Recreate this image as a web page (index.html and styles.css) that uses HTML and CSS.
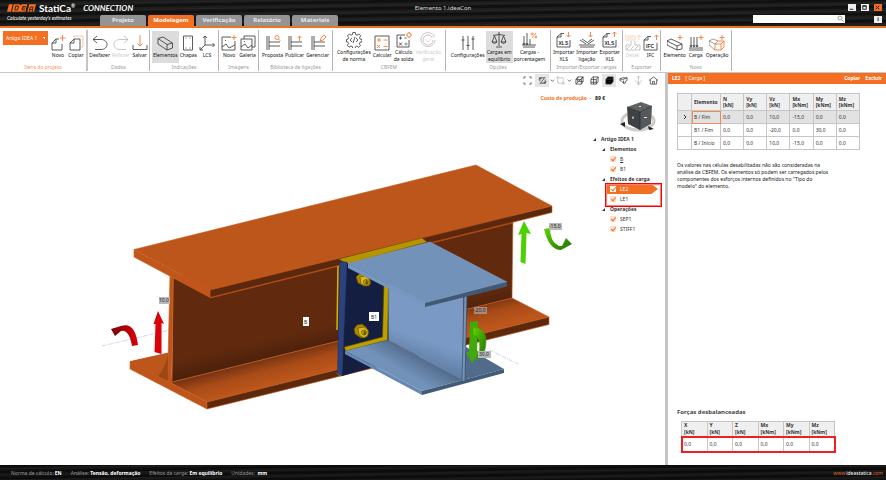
FILE: index.html
```html
<!DOCTYPE html>
<html lang="pt">
<head>
<meta charset="utf-8">
<title>Elemento 1.ideaCon</title>
<link rel="stylesheet" href="styles.css">
</head>
<body>
<svg class="sprite" aria-hidden="true">
  <symbol id="new" viewBox="0 0 16 16"><path d="M9 4H6L2 8v7h10V9M6 4v4H2"/><path class="o" d="M12.500 0v6M9.500 3h6"/></symbol>
  <symbol id="copy" viewBox="0 0 16 16"><path class="p" d="M6 3V1h9v11h-2"/><path d="M6 4h6v11H2V8zM6 4v4H2"/></symbol>
  <symbol id="undo" viewBox="0 0 16 16"><path d="M5 1L1 4.500 5 8M1 4.500h8c8 0 8 10 0 10H3"/></symbol>
  <symbol id="redo" viewBox="0 0 16 16"><path d="M11 1l4 3.500L11 8M15 4.500H7c-8 0-8 10 0 10h6"/></symbol>
  <symbol id="save" viewBox="0 0 16 16"><path class="o" d="M8 0v11M5.500 8.500L8 11l2.500-2.500"/><path d="M1 10v4.500h14V10"/></symbol>
  <symbol id="beam" viewBox="0 0 16 16"><path d="M1 3.500L6 2l9.500 6v5L10 15 1 9zM1 3.500L10 9.500 15.500 8M10 9.500V15"/></symbol>
  <symbol id="plate" viewBox="0 0 16 16"><path d="M3.500 1h9v14h-9z"/><path d="M5.500 3h1M9.500 3h1M5.500 13h1M9.500 13h1"/></symbol>
  <symbol id="axes" viewBox="0 0 16 16"><path d="M6 1v9h9.500M6 10l-5 5M4 3l2-2 2 2M13.500 8l2 2-2 2M1 12v3h3"/></symbol>
  <symbol id="image" viewBox="0 0 16 16"><path d="M10 2H1v13h13V6M1 12l4-3 3 4 6-3M4 5.500h1"/><path class="o" d="M13 0v5M10.500 2.500h5"/></symbol>
  <symbol id="gallery" viewBox="0 0 16 16"><path d="M1 4h11v11H1zM4 4V1h11v11h-3M1 12l4-3 3 4 4-3M4 6.500h1"/></symbol>
  <symbol id="propose" viewBox="0 0 16 16"><path d="M2 1v14M4 1v14M4 7h11M4 11h11"/><circle class="o" cx="12" cy="2.500" r="2"/><path class="o" d="M13.500 4l2 2"/></symbol>
  <symbol id="publish" viewBox="0 0 16 16"><path d="M2 1v14M4 1v14M4 7h11M4 11h11"/><path class="o" d="M12.500 6V1M10.500 3l2-2 2 2"/></symbol>
  <symbol id="manage" viewBox="0 0 16 16"><path d="M2 1v14M4 1v14M4 7h11M4 11h11"/><path class="o" d="M10 6l1-3 3-3 2 2-3 3z"/></symbol>
  <symbol id="gear" viewBox="0 0 16 16"><path d="M6.800.500h2.400l.4 2 1.500.700 1.800-1.200 1.800 1.800-1.200 1.800.700 1.500 1.800.4v2.400l-2 .4-.700 1.500 1.200 1.800-1.800 1.800-1.800-1.200-1.500.700-.4 1.800H6.800l-.4-2-1.500-.700-1.800 1.200-1.800-1.800 1.200-1.800-.700-1.500-1.300-.2V7.500l1.500-.400.700-1.500L1.500 3.800l1.800-1.800 1.800 1.200 1.400-.7z"/><path d="M6 6L4 8l2 2M10 6l2 2-2 2M9 5l-2 6"/></symbol>
  <symbol id="calc" viewBox="0 0 16 16"><path d="M1 1h14v14H1z"/><path class="o" d="M3 5h4M5 3v4M9.500 5h4M3 10l3 3M6 10l-3 3M9.500 11.500h4M11.500 9.500v.500M11.500 13v.500"/></symbol>
  <symbol id="weld" viewBox="0 0 16 16"><path d="M9 3H1v12h12V8M3 6h3M4.500 4.500v3M8.500 6h2M3 10.500l3 3M6 10.500l-3 3M8.500 12h3M10 10v.500M10 13.500v.500"/><circle class="o" cx="13" cy="3" r="2"/><path class="o" d="M13 0v1M16 3h-1M13 6V5M10 3h1"/></symbol>
  <symbol id="check" viewBox="0 0 16 16"><path d="M14.500 5A7 7 0 1 0 15 8M12 5a5 5 0 1 0 1 3"/><path class="o" d="M5 7l3 3 7-8"/></symbol>
  <symbol id="sliders" viewBox="0 0 16 16"><path d="M3 1v14M8 1v14M13 1v14M1.500 5h3M6.500 10.500h3M11.500 4h3"/></symbol>
  <symbol id="scale" viewBox="0 0 16 16"><path d="M8 0v14M5 15h6M2 3.500l6-1 6 1M3.500 4L1 10h5zM12.500 4L10 10h5zM1 10q2.500 3 5 0M10 10q2.500 3 5 0"/></symbol>
  <symbol id="percent" viewBox="0 0 16 16"><path d="M3 4v9M6 1v12M9 7v6M1 13h14M2 15h12M2 11l1 2 1-2M5 11l1 2 1-2"/><circle class="o" cx="11" cy="2" r="1"/><circle class="o" cx="15" cy="5" r="1"/><path class="o" d="M15 1l-4 5"/></symbol>
  <symbol id="xlsin" viewBox="0 0 16 16"><path d="M8 1.500H5L1 5v10h13V8M5 1.500V5H1"/><path class="o" d="M12.500 0v5M10.500 3l2 2 2-2"/><text x="2.500" y="12.500">XLS</text></symbol>
  <symbol id="xlsout" viewBox="0 0 16 16"><path d="M8 1.500H5L1 5v10h13V8M5 1.500V5H1"/><path class="o" d="M12.500 5V0M10.500 2l2-2 2 2"/><text x="2.500" y="12.500">XLS</text></symbol>
  <symbol id="ifc" viewBox="0 0 16 16"><path d="M8 1.500H5L1 5v10h13V8M5 1.500V5H1"/><path class="o" d="M13.500 5V0M11.500 2l2-2 2 2"/><text x="3" y="12.500">IFC</text></symbol>
  <symbol id="joint" viewBox="0 0 16 16"><path d="M0 13h16M1 8l6 4M3 7l6 4M15 8l-6 4M13 7l-4 3M1 15h14"/><path class="o" d="M11.500 0v5M9.500 3l2 2 2-2"/></symbol>
  <symbol id="detail" viewBox="0 0 16 16"><path d="M6 6v4H1v5h14v-5h-5V6M2 14l3-3M6 14l3-3M10 14l3-3"/><path class="o" d="M0 1h10v4H0zM2 3h6M14 5V0M12 2l2-2 2 2"/></symbol>
  <symbol id="addbeam" viewBox="0 0 16 16"><path d="M0 6l4-2 11 5v5l-5 1L0 10zM0 6l10 5 5-2M10 11v4"/><path class="o" d="M13 0v5M10.500 2.500h5"/></symbol>
  <symbol id="addload" viewBox="0 0 16 16"><path d="M3 2v10M6 2v10M9 2v10M1 13h14M1 15h14M2 10l1 2 1-2M5 10l1 2 1-2M8 10l1 2 1-2"/><path class="o" d="M13 0v5M10.500 2.500h5"/></symbol>
  <symbol id="addop" viewBox="0 0 16 16"><path d="M6 15L0 10V6l4-2 5 2M0 6l6 3" opacity=".6"/><path class="o" d="M6 9h6v6H6zM6 9l3-3h6l-3 3M15 6v6l-3 3M13 0v5M10.500 2.500h5"/></symbol>
</svg>

<header class="top">
  <div class="brand">
    <div class="logo">
      <svg viewBox="0 0 30 8" aria-hidden="true"><path d="M2 0h4L4 8H0zM7 0h6l2 2-1.500 6H5zM15 0h6l-2 8h-6zM23 0h7l-2 8h-7z" fill="#f36f21"/><path d="M9 2h3l-1 4H8zM19.500 2.500h-3l-1 3.500h3M16 4h3M23 8l1-5h3l-1 5M23.500 5.500h3" fill="none" stroke="#111"/></svg>
      <b>StatiCa<sup>®</sup></b><strong>CONNECTION</strong>
    </div>
    <em>Calculate yesterday's estimates</em>
  </div>
  <nav class="tabs">
    <a href="#">Projeto</a><a href="#" class="on">Modelagem</a><a href="#">Verificação</a><a href="#">Relatório</a><a href="#">Materiais</a>
  </nav>
  <h1>Elemento 1.ideaCon</h1>
  <div class="win">
    <div class="ctl">
      <button aria-label="Minimizar"><svg viewBox="0 0 8 8"><path d="M2 6h4"/></svg></button>
      <button aria-label="Maximizar"><svg viewBox="0 0 8 8"><path d="M2 2h4v4H2zM2 2.500h4"/></svg></button>
      <button aria-label="Fechar" class="close"><svg viewBox="0 0 8 8"><path d="M2 2l4 4M6 2L2 6"/></svg></button>
    </div>
    <div class="find">
      <label><input type="search" aria-label="Pesquisar"><svg viewBox="0 0 8 8"><circle cx="3" cy="3" r="2"/><path d="M4.500 4.500L7 7"/></svg></label>
      <button aria-label="Informação">i</button>
    </div>
  </div>
</header>

<section class="ribbon">
  <div class="group first"><div class="tools"><select aria-label="Item do projeto"><option>Artigo IDEA 1</option></select>
    <button><svg><use href="#new"/></svg>Novo</button><button><svg><use href="#copy"/></svg>Copiar</button></div><h2>Itens do projeto</h2></div>
  <div class="group"><div class="tools"><button><svg><use href="#undo"/></svg>Desfazer</button><button disabled><svg><use href="#redo"/></svg>Refazer</button><button><svg><use href="#save"/></svg>Salvar</button></div><h2>Dados</h2></div>
  <div class="group"><div class="tools"><button class="sel"><svg><use href="#beam"/></svg>Elementos</button><button><svg><use href="#plate"/></svg>Chapas</button><button><svg><use href="#axes"/></svg>LCS</button></div><h2>Indicações</h2></div>
  <div class="group"><div class="tools"><button><svg><use href="#image"/></svg>Novo</button><button><svg><use href="#gallery"/></svg>Galeria</button></div><h2>Imagens</h2></div>
  <div class="group"><div class="tools"><button><svg><use href="#propose"/></svg>Proposta</button><button><svg><use href="#publish"/></svg>Publicar</button><button><svg><use href="#manage"/></svg>Gerenciar</button></div><h2>Biblioteca de ligações</h2></div>
  <div class="group"><div class="tools"><button><svg><use href="#gear"/></svg>Configurações<br>de norma</button><button><svg><use href="#calc"/></svg>Calcular</button><button><svg><use href="#weld"/></svg>Cálculo<br>da solda</button><button disabled><svg><use href="#check"/></svg>Verificação<br>geral</button></div><h2>CBFEM</h2></div>
  <div class="group"><div class="tools"><button><svg><use href="#sliders"/></svg>Configurações</button><button class="sel"><svg><use href="#scale"/></svg>Cargas em<br>equilíbrio</button><button><svg><use href="#percent"/></svg>Cargas -<br>porcentagem</button></div><h2>Opções</h2></div>
  <div class="group"><div class="tools"><button><svg><use href="#xlsin"/></svg>Importar<br>XLS</button><button><svg><use href="#joint"/></svg>Importar<br>ligação</button><button><svg><use href="#xlsout"/></svg>Exportar<br>XLS</button></div><h2>Importar/Exportar cargas</h2></div>
  <div class="group"><div class="tools"><button disabled><svg><use href="#detail"/></svg>Detail</button><button><svg><use href="#ifc"/></svg>IFC</button></div><h2>Exportar</h2></div>
  <div class="group"><div class="tools"><button><svg><use href="#addbeam"/></svg>Elemento</button><button><svg><use href="#addload"/></svg>Carga</button><button><svg><use href="#addop"/></svg>Operação</button></div><h2>Novo</h2></div>
</section>

<main>
  <section class="stage">
    <svg class="scene" viewBox="0 73 665 392" role="img" aria-label="Modelo 3D">
      <defs>
        <linearGradient id="shade" gradientUnits="userSpaceOnUse" x1="330" y1="340" x2="337" y2="367"><stop offset="0" stop-color="#6d3012"/><stop offset=".5" stop-color="#a94b18"/><stop offset="1" stop-color="#bc561b"/></linearGradient>
        <linearGradient id="webg" gradientUnits="userSpaceOnUse" x1="330" y1="325" x2="334" y2="343"><stop offset="0" stop-color="#612a0e"/><stop offset="1" stop-color="#4d210b"/></linearGradient>
        <linearGradient id="bshade" gradientUnits="userSpaceOnUse" x1="424" y1="358" x2="413" y2="377"><stop offset="0" stop-color="#526b8c"/><stop offset="1" stop-color="#7292b9"/></linearGradient>
        <linearGradient id="bweb" gradientUnits="userSpaceOnUse" x1="426" y1="340" x2="419" y2="360"><stop offset="0" stop-color="#7a9ac5"/><stop offset="1" stop-color="#6381a8"/></linearGradient>
        <linearGradient id="green" x2="1" y2="1"><stop offset="0" stop-color="#5ed500"/><stop offset="1" stop-color="#236c08"/></linearGradient>
        <linearGradient id="red" x2="1"><stop offset="0" stop-color="#780006"/><stop offset="1" stop-color="#dc0009"/></linearGradient>
      </defs>
      <path d="M102 346l68-16M490 350l28 14" fill="none" stroke="#b8cce8" stroke-dasharray="4 1 1 1"/>
      <g stroke="#cd5e1d" stroke-width=".6">
        <path d="M130 361.500L168 353l4 29 340-84 37 19-342 85z" fill="url(#shade)"/>
        <path d="M130 361.500L207 402v7l-77-40z" fill="#bd541a"/>
        <path d="M207 402l342-85v7.500L207 409z" fill="#5d290e"/>
        <path d="M130 361.500L168 353l2 29 2 1.500z" fill="#bc561b" stroke="none"/>
        <path d="M173 277l340-62-1 83-340 84z" fill="url(#webg)"/>
        <path d="M170 274l3.500 3-2 105-4 1z" fill="#be561c"/>
        <path d="M134 249.500L476 165l76 41-342 84z" fill="#bc561b"/>
        <path d="M134 249.500L210 290v7.500L134 257z" fill="#c0561b"/>
        <path d="M210 290l342-84v6.500L210 297.500z" fill="#5b280e"/>
        <path d="M210 298l303-75" fill="none"/>
      </g>
      <path d="M168 354v27l-10-5q7-7 10-22z" fill="#652b0f" opacity=".35"/>
      <path d="M339 259l83-21 5 4-80 22z" fill="#b49400" stroke="#6f5900" stroke-width=".5"/>
      <path d="M338 266l-1 64M337 373l4 3" stroke="#d3b400" stroke-width="1.500"/>
      <path d="M347 263l42 20v62l-19 23-28 8z" fill="#131e40"/>
      <path d="M340 262h7l-5 114-4.500-2z" fill="#2a437f" stroke="#1c2c5c" stroke-width=".5"/>
      <path d="M384 284l4.500 2-1 54-42 11-1-4 38-10z" fill="#bba000" stroke="#685500" stroke-width=".6"/>
      <g fill="#a98800" stroke="#5e4b00" stroke-width=".6">
        <path d="M356 277l3-3 5 0 4 3 3 5-2 4-5 0-6-3z"/><path d="M360 277l5-1 4 3 1 5-4 2-5-2z" fill="#d8b91a"/><circle cx="366" cy="282" r="2.500" fill="#c2a20a"/><path d="M366 280.500l1.500 1v2l-1.500 1z" fill="#6a5600"/>
        <path d="M354 329l3-4 5-1 4 3 3 5-2 5-6 1-6-4z"/><path d="M358 328l6-1 4 3 0 5-4 3-5-3z" fill="#d8b91a"/><circle cx="364" cy="332.500" r="2.500" fill="#c2a20a"/><path d="M364 331l1.500 1v2l-1.500 1z" fill="#6a5600"/>
      </g>
      <path d="M345 351l43-11 74 39 4-32 38 22-82 22z" fill="url(#bshade)"/>
      <path d="M345 351l77 40v4l-77-41z" fill="#6788b2"/><path d="M422 391l82-22v4l-82 22z" fill="#425b77"/>
      <path d="M388.500 284l75 8-1 88-74-40z" fill="url(#bweb)"/>
      <path d="M464 294l3-1-2 88-3 1z" fill="#7594b9" stroke="#344963" stroke-width=".7"/>
      <path d="M348 263.500l82-21.500 77 40-82 21z" fill="#7292b9" stroke="#86a6cc" stroke-width=".5"/>
      <path d="M348 263.500L425 303v4l-77-39z" fill="#7798c1"/><path d="M425 303l82-21v4.500l-82 20.500z" fill="#415974"/>
      <path d="M518 235l6-14 7 13-4.500-1-1 31-5-2 1-28z" fill="#4bd000"/>
      <path d="M544 229l6-1q0 14 9 18l3 0 4-8 6 6-11 6q-12 0-17-21z" fill="url(#green)"/>
      <path d="M158 311l6 13-2.500-1V354l-7-2 1-28-2 0z" fill="#dc0009"/>
      <path d="M111 329l10-3q14-5 17 19l-6 1q-3-17-11-15l-6 5z" fill="url(#red)"/>
      <path d="M470 322l8-1-1 30h3l-8 12-6-11h3z" fill="#43a80b"/>
      <path d="M473 327q13 1 13 14 0 10-5 17l-6 2 4-6q3-17-6-19z" fill="url(#green)" stroke="#3ca008" stroke-width=".5"/>
      <g fill="#b9b9b9"><path d="M159 297h11v7h-11zM549 223h13v7h-13zM478 351h13v7h-13z"/><path d="M474 307h13v7h-13z" fill="#a98b7b"/><path d="M303 317h6v9h-6zM369 312h10v9h-10z" fill="#fff"/></g>
      <g class="tags"><text x="159" y="302">10,0</text><text x="549" y="228">-15,0</text><text x="474" y="312">-20,0</text><text x="479" y="356">30,0</text><text x="304" y="324">B</text><text x="371" y="319">B1</text></g>
    </svg>

    <div class="viewbar">
      <button aria-label="Ajustar"><svg viewBox="0 0 10 10"><path d="M1 3V1h2M7 1h2v2M9 7v2H7M3 9H1V7"/></svg></button>
      <button aria-label="Girar" class="lit"><svg viewBox="0 0 10 10"><path d="M2 6V2h5M8 4v4H3M1 4l1-2 2 1M9 6L8 8 6 7M2 9l6-8"/></svg></button><button aria-label="Opções de giro" class="arrow"><svg class="chev" viewBox="0 0 6 6"><path d="M1 2l2 2 2-2"/></svg></button>
      <button aria-label="Recorte" class="crop"><svg class="dim" viewBox="0 0 10 10"><path d="M2 0v8h8M0 2h8v8"/></svg></button><button aria-label="Opções de recorte" class="arrow"><svg class="chev" viewBox="0 0 6 6"><path d="M1 2l2 2 2-2"/></svg></button>
      <button aria-label="Aramado"><svg viewBox="0 0 10 10"><path d="M1 4l2-3h6v5L7 9H1zM1 4h6v5M7 4l2-3M1 9l8-8M3 1v5h6"/></svg></button>
      <button aria-label="Transparente"><svg viewBox="0 0 10 10"><path d="M1 4l2-3h6v5L7 9H1zM1 4h6v5M7 4l2-3M4 1v8M1 7h7"/></svg></button>
      <button aria-label="Sólido" class="lit"><svg viewBox="0 0 10 10"><path d="M1 4l2-3h6v5L7 9H1z" fill="#000"/><path d="M1.500 3.500h6l1.500-2" stroke="#888" stroke-width=".5"/></svg></button>
      <button aria-label="Seção"><svg viewBox="0 0 10 10"><path d="M1 3l3-1h5v3L7 6v2H5L3 6 1 5zM1 3l3 1 5-2M5 5v3"/></svg></button>
      <button aria-label="Mover"><svg class="dim" viewBox="0 0 10 10"><path d="M5 0v10M3 2l2-2 2 2M1 5l4 3 4-3M3 8l2 2 2-2"/></svg></button>
      <button aria-label="Vista inicial"><svg viewBox="0 0 10 10"><path d="M0 5l5-4 5 4M1.500 4v5h7V4M4 9V6h2v3"/></svg></button>
    </div>
    <p class="cost"><b>Custo de produção</b> &nbsp;- &nbsp; <span>89 €</span></p>
    <svg class="cube" viewBox="0 0 38 34" aria-label="Cubo de navegação"><ellipse cx="19" cy="21" rx="16" ry="9" fill="none" stroke="#ccc" stroke-width="3"/><path d="M8 7l14-5 11 4-12 6z" fill="#606264"/><path d="M8 7l13 5v18L9 24z" fill="#3f4244"/><path d="M21 12l12-6-1 18-11 6z" fill="#56595b"/><path d="M8 7l13 5 12-6M21 12v18" fill="none" stroke="#242628" stroke-width=".7"/><path d="M13 18l1-2 1 2-1 1zM25 17h3v1h-3zM20 6h2v1h-2z" fill="#ddd"/><path d="M1 24l5-2 0 5zM29 26l6 3-5 1z" fill="#222"/></svg>
    <ul class="tree">
      <li class="l0 node">Artigo IDEA 1</li>
      <li class="l1 node">Elementos</li>
      <li class="l2"><label><input type="checkbox" checked><u>B</u></label></li>
      <li class="l2"><label><input type="checkbox" checked>B1</label></li>
      <li class="l1 node">Efeitos de carga</li>
      <li class="l2 cur"><label><input type="checkbox" checked>LE2</label></li>
      <li class="l2"><label><input type="checkbox" checked>LE1</label></li>
      <li class="l1 node">Operações</li>
      <li class="l2"><label><input type="checkbox" checked>SEP1</label></li>
      <li class="l2"><label><input type="checkbox" checked>STIFF1</label></li>
    </ul>
  </section>

  <aside>
    <div class="phead"><b>LE2</b><span>[ Carga ]</span><a href="#">Copiar</a><a href="#">Excluir</a></div>
    <div class="pbody">
      <table class="loads">
        <colgroup><col class="c0"><col class="c1"><col span="6"></colgroup>
        <thead><tr><th></th><th>Elemento</th><th>N<br>[kN]</th><th>Vy<br>[kN]</th><th>Vz<br>[kN]</th><th>Mx<br>[kNm]</th><th>My<br>[kNm]</th><th>Mz<br>[kNm]</th></tr></thead>
        <tbody>
          <tr class="act"><td><svg viewBox="0 0 6 6"><path d="M2 1l2 2-2 2"/></svg></td><td class="edit">B / Fim</td><td>0,0</td><td>0,0</td><td>10,0</td><td>-15,0</td><td>0,0</td><td>0,0</td></tr>
          <tr><td></td><td>B1 / Fim</td><td>0,0</td><td>0,0</td><td>-20,0</td><td>0,0</td><td>30,0</td><td>0,0</td></tr>
          <tr><td></td><td>B / Início</td><td>0,0</td><td>0,0</td><td>10,0</td><td>-15,0</td><td>0,0</td><td>0,0</td></tr>
        </tbody>
      </table>
      <p>Os valores nas células desabilitadas não são consideradas na análise da CBFEM. Os elementos só podem ser carregados pelos componentes dos esforços internos definidos no "Tipo do modelo"&nbsp;do&nbsp;elemento.</p>
      <h3>Forças desbalanceadas</h3>
      <table class="forces">
        <thead><tr><th>X<br>[kN]</th><th>Y<br>[kN]</th><th>Z<br>[kN]</th><th>Mx<br>[kNm]</th><th>My<br>[kNm]</th><th>Mz<br>[kNm]</th></tr></thead>
        <tbody><tr><td>0,0</td><td>0,0</td><td>0,0</td><td>0,0</td><td>0,0</td><td>0,0</td></tr></tbody>
      </table>
    </div>
  </aside>
</main>

<footer>
  <span>Norma de cálculo: <b>EN</b></span><span>Análise: <b>Tensão, deformação</b></span><span>Efeitos da carga: <b>Em equilíbrio</b></span><span>Unidades: &nbsp;<b>mm</b></span>
  <a href="#">www.<b>ideastatica</b>.com</a>
</footer>
</body>
</html>
```
FILE: styles.css
```css
* { box-sizing: border-box; }
html, body { height: 100%; }
body { margin: 0; display: flex; flex-direction: column; overflow: hidden; background: #fff; color: #222; font: 5px/7px "Noto Sans", "Open Sans", sans-serif; }
button, input, select { font: inherit; color: inherit; margin: 0; padding: 0; border: 0; background: none; }
a { color: inherit; text-decoration: none; }
h1, h2, h3, p, ul { margin: 0; padding: 0; }
svg { fill: none; stroke: #333; stroke-width: .8; }
.sprite { display: none; }
.o, .p { stroke: #f36f21; }
.p { stroke: #f9b58e; }
symbol text { font: bold 5px "Liberation Sans", sans-serif; fill: #333; stroke: none; }

.top { position: relative; flex: none; display: flex; justify-content: space-between; height: 28px; border-bottom: 2px solid #f36f21; background: repeating-linear-gradient(179deg, #101010 0 2px, #1d1d1d 3px 4px, #252525 5px, #141414 7px); color: #fff; }
.brand { flex: none; width: 100px; padding: 3px 0 0 7px; white-space: nowrap; }
.logo { display: flex; align-items: center; gap: 3px; width: max-content; height: 10px; }
.logo svg { flex: none; width: 29px; height: 8px; stroke: none; }
.logo b { font: bold 10px/10px Lato, sans-serif; }
.logo sup { font-size: 5px; vertical-align: 4px; line-height: 1; }
.logo strong { margin-left: 5px; font: italic bold 8px/10px Lato, sans-serif; }
.brand em { display: block; margin-top: 1px; font: italic 5px/8px Lato, sans-serif; }
.tabs { display: flex; gap: 2px; flex: 1; align-items: flex-end; }
.tabs a { width: 46px; height: 11px; border-radius: 2px 2px 0 0; background: #949494; font: bold 6px/11px "Noto Sans", sans-serif; text-align: center; color: #e9e9e9; }
.tabs .on { background: #f36f21; color: #fff; }
.top h1 { position: absolute; left: 0; right: 0; top: 4px; font: 6px/8px "Noto Sans", sans-serif; text-align: center; color: #ddd; pointer-events: none; }
.win { display: flex; flex-direction: column; gap: 4px; padding: 4px 4px 0 0; align-items: flex-end; }
.ctl { display: flex; gap: 5px; }
.win button { width: 8px; height: 7px; background: #eee; color: #111; font: bold 6px/7px "Liberation Sans", sans-serif; text-align: center; }
.win button svg { display: block; width: 7px; height: 7px; stroke: #111; stroke-width: 1; }
.win .close { background: #f36f21; }
.find { display: flex; gap: 29px; align-items: center; }
.find label { display: flex; width: 92px; height: 8px; background: #fff; }
.find input { flex: 1; min-width: 0; appearance: none; }
.find svg { width: 8px; height: 8px; stroke: #888; }

.ribbon { flex: none; display: grid; grid-template-columns: 88px 62px 69px 40px 74px 113px 105px 72px 38px 71px; height: 45px; padding: 2px 0 1px; border-bottom: 1px solid #c8c8c8; background: #fff; }
.group { display: flex; flex-direction: column; justify-content: space-between; border-right: 1px solid #b5b5b5; min-width: 0; }
.tools { display: flex; justify-content: center; height: 33px; padding-top: 1px; }
.first { border-right: 2px solid #c4c4c4; }
.first .tools { justify-content: flex-start; padding-left: 3px; }
.ribbon h2 { font: 5px/7px "Noto Sans", sans-serif; color: #999; text-align: center; white-space: nowrap; }
.ribbon .first h2 { color: #f6945b; }
.tools button { display: block; padding: 0 1px; text-align: center; white-space: nowrap; line-height: 7px; color: #111; align-self: flex-start; height: 32px; }
.tools button svg { display: block; width: 16px; height: 16px; margin: 0 auto 1px; overflow: visible; }
.tools .sel { background: #dcdcdc; }
.tools button:disabled { color: #ccc; }
.tools button:disabled svg { opacity: .35; }
.tools select { width: 45px; height: 14px; margin-right: 1px; padding: 0 3px; appearance: none; color: #fff; background: linear-gradient(45deg, transparent 50%, #fff 50%) right 3px top 6px / 2px 2px no-repeat, #f36f21; }

main { flex: 1; display: flex; min-height: 0; }
.stage { position: relative; flex: 1; display: flex; flex-direction: column; align-items: flex-end; overflow: hidden; }
.scene { position: absolute; left: 0; top: 0; width: 100%; height: 100%; stroke: none; }
.tags text { font: 5px "Noto Sans", sans-serif; fill: #222; }
.viewbar { position: relative; display: flex; padding: 1px 4px 0 0; }
.viewbar button { display: flex; align-items: center; justify-content: center; width: 15px; height: 13px; }
.viewbar .crop { width: 11px; }
.viewbar .arrow { width: 6px; }
.viewbar .lit { width: 14px; background: #e6e6e6; }
.viewbar svg { width: 9px; height: 9px; }
.viewbar .chev { width: 5px; height: 5px; }
.viewbar .dim { opacity: .35; }
.cost { position: relative; margin: 7px 60px 0 0; color: #111; line-height: 8px; }
.cost b { color: #f36f21; }
.cost span { font-weight: bold; }
.cube { position: relative; width: 38px; height: 34px; margin: -2px 8px 0 0; stroke: none; }
.tree { position: relative; width: 75px; list-style: none; line-height: 10px; white-space: nowrap; color: #333; }
.tree li { position: relative; height: 10px; }
.node { font-weight: bold; }
.l0 { padding-left: 11px; }
.l1 { padding-left: 20px; }
.l2 { padding-left: 20px; }
.node::before { content: ""; position: absolute; margin: 4px 0 0 -8px; width: 3px; height: 3px; background: #333; clip-path: polygon(100% 0, 100% 100%, 0 100%); }
.tree label { display: flex; align-items: center; gap: 4px; height: 10px; }
.tree input { position: relative; width: 6px; height: 6px; appearance: none; background: #fbe0cd; }
.tree input::after { content: ""; position: absolute; left: 2px; top: 0; width: 2px; height: 4px; border: solid #f36f21; border-width: 0 1px 1px 0; transform: rotate(40deg); }
.cur label { margin: 0 7px 0 -3px; padding-left: 3px; background: #f36f21; color: #fff; clip-path: polygon(0 0, 87% 0, 100% 50%, 87% 100%, 0 100%); }
.cur input { background: #fff; }
.cur::after { content: ""; position: absolute; left: 15px; top: -1px; width: 55px; height: 22px; border: 1px solid #f00; outline: 1px solid #ff7d7d; outline-offset: -2px; z-index: 1; pointer-events: none; }

aside { flex: none; width: 221px; display: flex; flex-direction: column; border-left: 3px solid #c4c4c4; }
.phead { display: flex; gap: 5px; height: 11px; padding: 0 4px; background: #f36f21; color: #fff; line-height: 11px; }
.phead a { font-weight: bold; }
.phead span { margin-right: auto; }
.pbody { flex: 1; display: flex; flex-direction: column; align-items: flex-start; padding: 9px 9px 13px; }
table { border-collapse: collapse; table-layout: fixed; color: #333; }
th, td { padding: 0 2px; border: 1px solid #c6c6c6; text-align: left; }
th { background: #efefef; font-weight: bold; white-space: nowrap; vertical-align: middle; }
.loads { width: 183px; }
.c0 { width: 14px; }
.c1 { width: 29px; }
.loads th { height: 17px; line-height: 6px; }
.loads td { height: 13px; }
.act td { background: #e2e2e2; }
.loads .edit { outline: 1px solid #f08a50; outline-offset: -1px; }
.loads td svg { display: block; width: 6px; height: 6px; margin: auto; stroke-width: 1; }
.pbody p { width: 160px; margin-top: 12px; color: #222; }
.pbody h3 { margin: auto 0 5px; font: bold 6px/8px "Noto Sans", sans-serif; color: #444; }
.forces { width: 154px; margin-left: 4px; }
.forces th { height: 15px; line-height: 7px; }
.forces td { height: 15px; }
.forces tbody { outline: 2px solid #f02020; outline-offset: -1px; }

footer { flex: none; display: flex; align-items: center; gap: 9px; height: 15px; padding: 1px 3px 0 11px; background: repeating-linear-gradient(179deg, #0c0c0c 0 2px, #1a1a1a 3px 4px, #101010 6px); color: #999; white-space: nowrap; }
footer b { color: #fff; }
footer a { margin-left: auto; color: #e0662a; }
footer a b { font-weight: normal; }
```
